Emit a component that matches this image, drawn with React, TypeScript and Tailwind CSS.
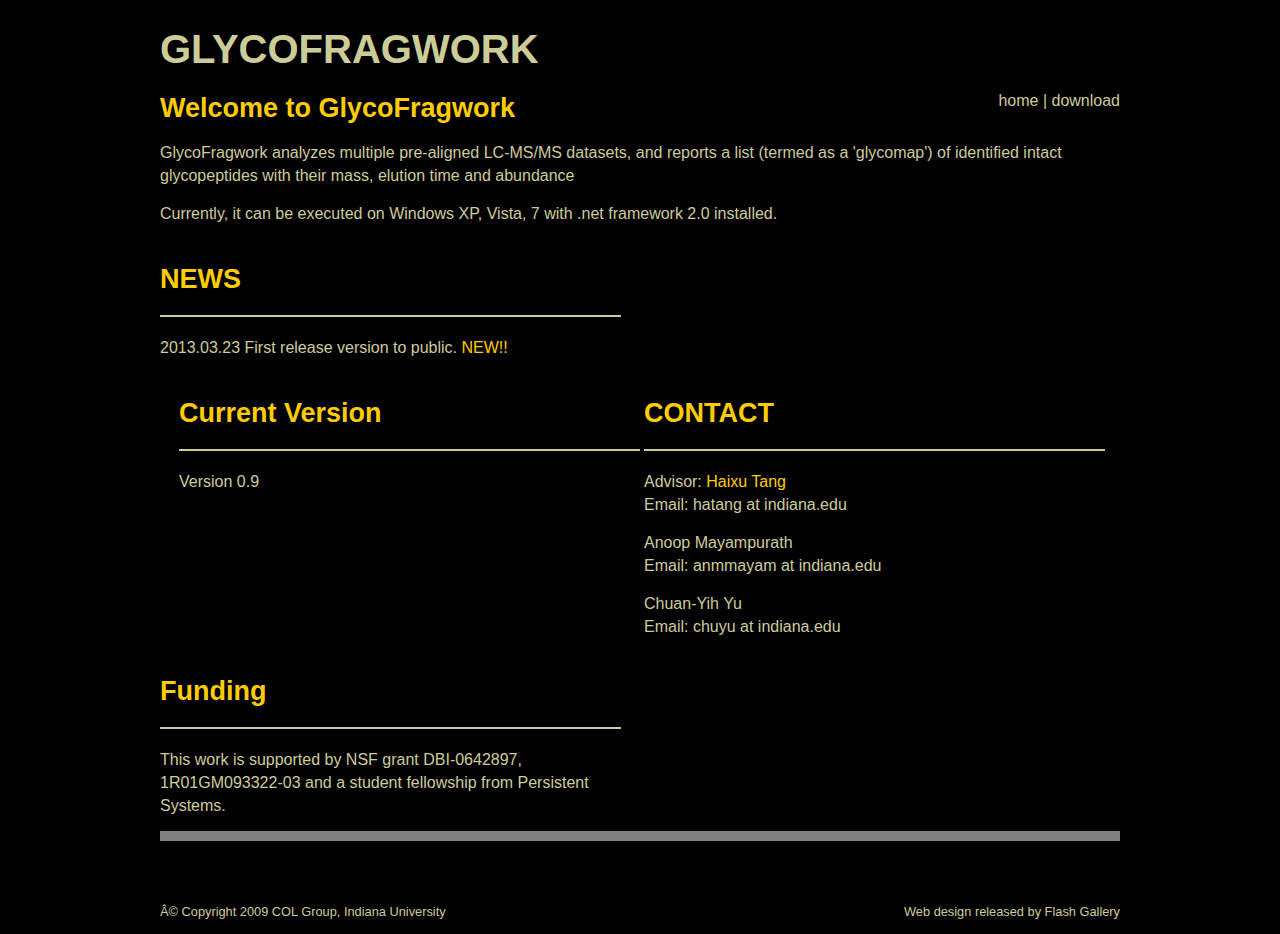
import React from 'react';

const Heading: React.FC<{ children: React.ReactNode }> = ({ children }) => (
  <div>
    <h2 className="text-[27px] font-bold leading-[32px] text-[#ffcc00]">{children}</h2>
    <div className="mt-[20px] h-[2px] bg-[#cccc99]"></div>
  </div>
);

const App: React.FC = () => {
  return (
    <div className="min-h-[934px] bg-black font-['Liberation_Sans',Arial,sans-serif] text-[16px] leading-[23px] text-[#cccc99]">
      <div className="mx-auto w-[960px] pt-[26px]">
        {/* Header */}
        <h1 className="text-[40px] font-bold leading-[46px] text-[#cccc99]">GLYCOFRAGWORK</h1>

        <div className="mt-[17px] flex items-start justify-between">
          <h2 className="mt-[3px] text-[27px] font-bold leading-[32px] text-[#ffcc00]">Welcome to GlycoFragwork</h2>
          <div>
            <a className="text-[#cccc99]">home</a> | <a className="text-[#cccc99]">download</a>
          </div>
        </div>

        <p className="mt-[17px]">
          GlycoFragwork analyzes multiple pre-aligned LC-MS/MS datasets, and reports a list (termed as a 'glycomap') of identified intact
          glycopeptides with their mass, elution time and abundance
        </p>
        <p className="mt-[15px]">Currently, it can be executed on Windows XP, Vista, 7 with .net framework 2.0 installed.</p>

        {/* News */}
        <div className="mt-[38px] w-[461px]">
          <Heading>NEWS</Heading>
          <p className="mt-[19px]">
            2013.03.23 First release version to public. <span className="text-[#ffcc00]">NEW!!</span>
          </p>
        </div>

        {/* Version / Contact */}
        <div className="mt-[38px] flex">
          <div className="w-[480px] pl-[19px]">
            <Heading>Current Version</Heading>
            <p className="mt-[19px]">Version 0.9</p>
          </div>
          <div className="w-[480px] pl-[4px] pr-[15px]">
            <Heading>CONTACT</Heading>
            <div className="mt-[19px] flex flex-col gap-[15px]">
              <p>
                Advisor: <a className="text-[#ffcc00]">Haixu Tang</a>
                <br />
                Email: hatang at indiana.edu
              </p>
              <p>
                Anoop Mayampurath
                <br />
                Email: anmmayam at indiana.edu
              </p>
              <p>
                Chuan-Yih Yu
                <br />
                Email: chuyu at indiana.edu
              </p>
            </div>
          </div>
        </div>

        {/* Funding */}
        <div className="mt-[37px] w-[461px]">
          <Heading>Funding</Heading>
          <p className="mt-[19px]">
            This work is supported by NSF grant DBI-0642897, 1R01GM093322-03 and a student fellowship from Persistent Systems.
          </p>
        </div>

        <div className="mt-[14px] h-[10px] bg-[#808080]"></div>

        {/* Footer */}
        <div className="mt-[63px] flex justify-between pb-[14px] text-[12.8px] leading-[16px]">
          <span>Â© Copyright 2009 COL Group, Indiana University</span>
          <span>Web design released by Flash Gallery</span>
        </div>
      </div>
    </div>
  );
};

export default App;
